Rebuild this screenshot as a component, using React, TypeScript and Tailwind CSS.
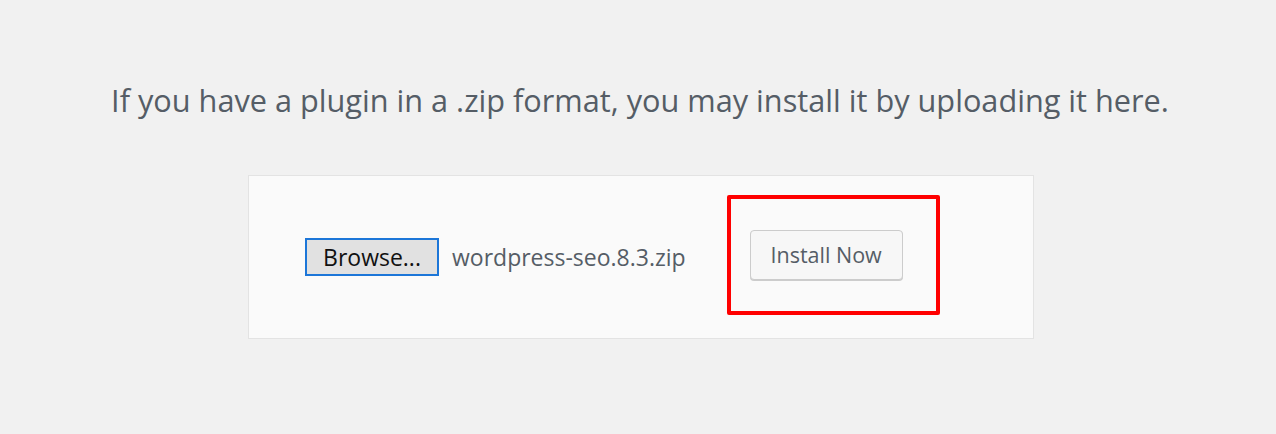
export default function App() {
  return (
    <div className="min-h-[434px] w-full bg-[#f1f1f1] flex flex-col items-center pt-[78px]" style={{ fontFamily: '"Open Sans", "Noto Sans", sans-serif' }}>
      <p className="ml-[4px] text-[30.7px] leading-[44px] text-[#555d66] text-center">
        If you have a plugin in a .zip format, you may install it by uploading it here.
      </p>
      <div className="ml-[6px] mt-[53px] w-[786px] h-[164px] bg-[#fafafa] border border-[#e3e3e3] flex items-center pl-[56px]">
        <button className="h-[38px] w-[134px] bg-[#e1e1e1] border-2 border-[#1c76d8] text-[23px] text-[#111] leading-none">
          Browse...
        </button>
        <span className="ml-[13px] text-[23px] text-[#555d66]">wordpress-seo.8.3.zip</span>
        <div className="ml-[41px] mb-[4px] border-[4px] border-[#ff0000] rounded-[2px] pt-[31px] pb-[31px] pl-[19px] pr-[33px]">
          <button className="h-[50px] w-[153px] rounded-[4px] border border-[#cccccc] bg-[#f7f7f7] shadow-[0_1px_0_#cccccc] text-[21.5px] text-[#555d66] leading-none">
            Install Now
          </button>
        </div>
      </div>
    </div>
  );
}
